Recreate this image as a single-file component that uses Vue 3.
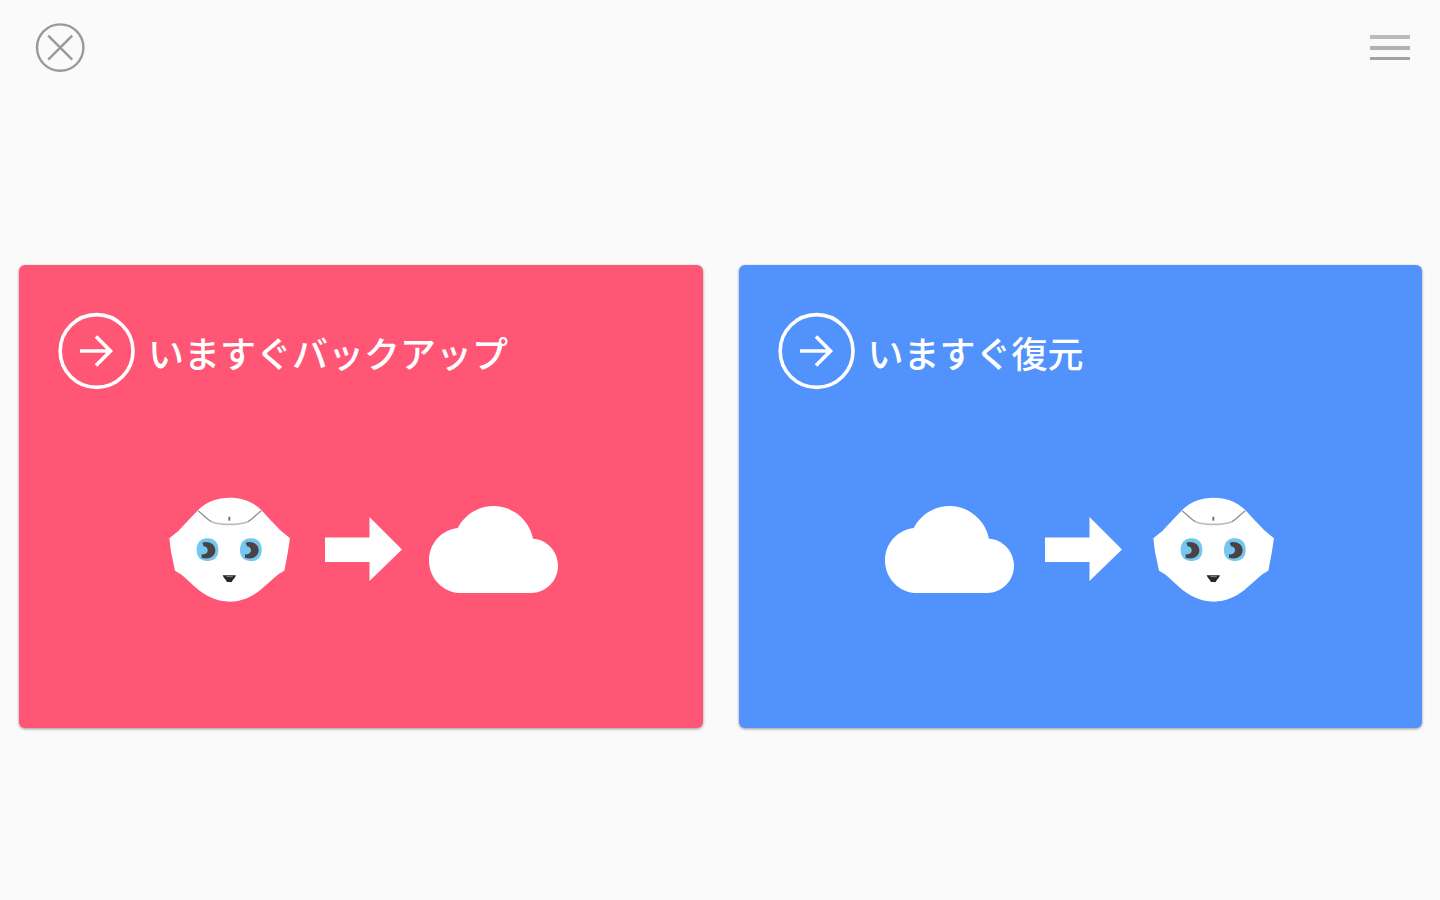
<template>
  <div class="screen">
    <header class="topbar">
      <button class="icon-btn" aria-label="close">
        <svg width="50" height="50" viewBox="0 0 50 50" fill="none" stroke="#999" stroke-width="2.4">
          <circle cx="25.2" cy="24.6" r="23.2" />
          <path d="M13.2 12.6L37.2 36.6M37.2 12.6L13.2 36.6" />
        </svg>
      </button>
      <button class="icon-btn menu-btn" aria-label="menu">
        <span class="bar bar-top"></span>
        <span class="bar bar-mid"></span>
        <span class="bar bar-low"></span>
      </button>
    </header>

    <main class="cards">
      <section v-for="card in cards" :key="card.id" class="card" :class="card.id">
        <div class="card-title">
          <svg width="78" height="78" viewBox="0 0 78 78" fill="none" stroke="#fff" stroke-width="3.6">
            <circle cx="38.6" cy="39" r="36.4" />
            <path d="M22 39H53M38 24.5L52.5 39L38 53.5" />
          </svg>
          <h2>{{ card.title }}</h2>
        </div>

        <div class="flow">
          <template v-for="part in card.parts" :key="part">
            <svg v-if="part === 'robot'" class="robot" viewBox="42 36 366 318">
              <path
                fill="#fff"
                d="M224 38C186 38 155 50 130 74L96 110L70 138L43 160L48 200L60 257L80 269L118 304C152 335 188 350 224 350C260 350 296 335 329 304L370 268L388 257L398 205L405 160L376 136L350 109L318 74C293 50 262 38 224 38Z"
              />
              <path d="M129 77C146 90 156 102 169 110" fill="none" stroke="#909090" stroke-width="4" />
              <path d="M319 77C302 90 292 102 279 110" fill="none" stroke="#909090" stroke-width="4" />
              <path d="M169 110C198 121 250 121 279 110" fill="none" stroke="#bbb" stroke-width="5" />
              <path d="M223 95V107" stroke="#777" stroke-width="6" />
              <g v-for="x in [158, 288]" :key="x">
                <rect :x="x - 33" y="160" width="65" height="68" rx="29" fill="#74c8ef" />
                <path
                  :d="`M${x - 16} 173C${x} 167 ${x + 23} 175 ${x + 23} 196C${x + 23} 217 ${x} 225 ${x - 18} 218L${x - 18} 208C${x + 4} 211 ${x + 6} 186 ${x - 12} 184Z`"
                  fill="#4a4244"
                />
              </g>
              <path d="M203 271H243C241 279 233 284 230 291H216C213 284 205 279 203 271Z" fill="#262626" />
              <path d="M214 275H233" stroke="#888" stroke-width="3" />
            </svg>

            <svg v-else-if="part === 'arrow'" class="arrow" viewBox="0 0 77 64">
              <path d="M0 20.5H44.5V0L77 32.5L44.5 64V45H0Z" fill="#fff" />
            </svg>

            <svg v-else class="cloud" viewBox="0 4 24 16" preserveAspectRatio="none">
              <path
                fill="#fff"
                d="M19.35 10.04C18.67 6.59 15.64 4 12 4 9.11 4 6.6 5.64 5.35 8.04 2.34 8.36 0 10.91 0 14c0 3.31 2.69 6 6 6h13c2.76 0 5-2.24 5-5 0-2.64-2.05-4.78-4.65-4.96z"
              />
            </svg>
          </template>
        </div>
      </section>
    </main>
  </div>
</template>

<script setup>
const cards = [
  { id: 'backup', title: 'いますぐバックアップ', parts: ['robot', 'arrow', 'cloud'] },
  { id: 'restore', title: 'いますぐ復元', parts: ['cloud', 'arrow', 'robot'] },
]
</script>

<style>
body {
  margin: 0;
  background: #fafafa;
}
</style>

<style scoped>
.screen {
  width: 1440px;
  height: 900px;
  overflow: hidden;
  background: #fafafa;
  font-family: "Noto Sans CJK JP", "Noto Sans", sans-serif;
}
.topbar {
  display: flex;
  justify-content: space-between;
  align-items: flex-start;
  box-sizing: border-box;
  height: 265px;
  padding: 23px 30px 0 35px;
}
.icon-btn {
  display: block;
  padding: 0;
  border: none;
  background: none;
  cursor: pointer;
}
.icon-btn svg {
  display: block;
}
.menu-btn {
  display: flex;
  flex-direction: column;
  gap: 7px;
  width: 40px;
  padding-top: 12px;
}
.bar {
  height: 4px;
  background: #bababa;
}
.bar-mid {
  background: #b2b2b2;
}
.bar-low {
  height: 3px;
  background: #a2a2a2;
}
.cards {
  display: flex;
  gap: 36px;
  padding: 0 18px 0 19px;
}
.card {
  box-sizing: border-box;
  width: 684px;
  height: 463px;
  padding: 47px 39px 0;
  border-radius: 6px;
  box-shadow: 0 1px 3px rgba(0, 0, 0, 0.4);
}
.backup {
  background: #ff5676;
}
.restore {
  background: #5292fc;
}
.card-title {
  display: flex;
  align-items: center;
  gap: 12px;
  height: 78px;
}
.card-title h2 {
  margin: 1px 0 0;
  color: #fff;
  font-size: 36px;
  font-weight: 500;
  line-height: 48px;
}
.flow {
  display: flex;
  align-items: center;
  height: 106px;
  margin-top: 107px;
}
.backup .flow {
  gap: 30.5px;
  padding-left: 111px;
}
.restore .flow {
  gap: 31px;
  padding-left: 107.5px;
}
.flow svg {
  flex: none;
}
.robot {
  width: 122px;
  height: 106px;
}
.arrow {
  width: 77px;
  height: 64px;
  margin-bottom: 2px;
}
.cloud {
  width: 129px;
  height: 87px;
  margin-bottom: 2px;
}
.backup .arrow {
  margin: 0 -3.5px 2px 3.5px;
}
.restore .arrow {
  margin-left: -0.5px;
}
</style>
